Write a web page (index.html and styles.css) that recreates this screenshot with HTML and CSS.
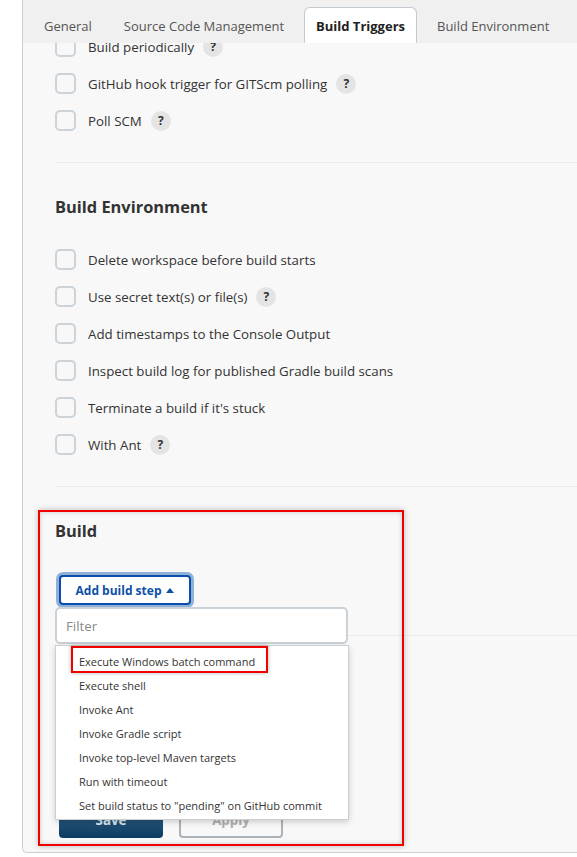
FILE: index.html
```html
<!DOCTYPE html>
<html>
<head>
<meta charset="utf-8">
<link rel="stylesheet" href="styles.css">
</head>
<body>
<div class="page">
  <div class="gutter"></div>
  <div class="panel">
    <nav class="tabs">
      <span class="tab">General</span>
      <span class="tab">Source Code Management</span>
      <span class="tab active">Build Triggers</span>
      <span class="tab">Build Environment</span>
    </nav>
    <div class="content">
      <section class="section first">
        <label class="row"><span class="box"></span><span>Build periodically</span><span class="help">?</span></label>
        <label class="row"><span class="box"></span><span>GitHub hook trigger for GITScm polling</span><span class="help">?</span></label>
        <label class="row"><span class="box"></span><span>Poll SCM</span><span class="help">?</span></label>
      </section>
      <section class="section">
        <h2 class="heading">Build Environment</h2>
        <div class="rows">
          <label class="row"><span class="box"></span><span>Delete workspace before build starts</span></label>
          <label class="row"><span class="box"></span><span>Use secret text(s) or file(s)</span><span class="help">?</span></label>
          <label class="row"><span class="box"></span><span>Add timestamps to the Console Output</span></label>
          <label class="row"><span class="box"></span><span>Inspect build log for published Gradle build scans</span></label>
          <label class="row"><span class="box"></span><span>Terminate a build if it's stuck</span></label>
          <label class="row"><span class="box"></span><span>With Ant</span><span class="help">?</span></label>
        </div>
      </section>
      <section class="section build">
        <h2 class="heading">Build</h2>
        <div class="step-wrap">
          <button class="add-step">Add build step <span class="caret"></span></button>
          <div class="popup">
            <input class="filter" placeholder="Filter">
            <ul class="menu">
              <li class="item hl">Execute Windows batch command<span class="mark"></span></li>
              <li class="item">Execute shell</li>
              <li class="item">Invoke Ant</li>
              <li class="item">Invoke Gradle script</li>
              <li class="item">Invoke top-level Maven targets</li>
              <li class="item">Run with timeout</li>
              <li class="item">Set build status to "pending" on GitHub commit</li>
            </ul>
          </div>
        </div>
      </section>
    </div>
    <div class="bottom-bar">
      <button class="btn save">Save</button>
      <button class="btn apply">Apply</button>
    </div>
    <div class="annot"></div>
  </div>
</div>
</body>
</html>
```
FILE: styles.css
```css
* { box-sizing: border-box; }
html, body { margin: 0; padding: 0; background: #fff; }
body {
  font-family: "Open Sans", "Noto Sans", sans-serif;
  color: #333;
  font-size: 13.3px;
  width: 577px;
  height: 857px;
  overflow: hidden;
}
.page { display: flex; height: 853px; }
.gutter { width: 22px; flex: none; background: #fff; }
.panel {
  position: relative;
  flex: 1;
  display: flex;
  flex-direction: column;
  background: #f8f8f8;
  border-left: 1px solid #c9cfd5;
  border-bottom: 1px solid #c9cfd5;
  border-bottom-left-radius: 5px;
  overflow: hidden;
}
.tabs {
  position: relative;
  z-index: 2;
  height: 43px;
  flex: none;
  display: flex;
  align-items: flex-end;
  gap: 8px;
  padding-left: 9px;
  background: #f0f0f0;
}
.tab {
  height: 36px;
  display: flex;
  align-items: center;
  padding: 0 11px;
  border: 1px solid transparent;
  border-bottom: 0;
  color: #555;
  font-size: 13px;
  white-space: nowrap;
}
.tab.active {
  background: #fff;
  border-color: #c3cad1;
  border-radius: 6px 6px 0 0;
  color: #222;
  font-weight: 700;
}
.content {
  position: relative;
  z-index: 1;
  margin-top: -15px;
  padding-left: 32px;
}
.section {
  padding: 32px 0 23px;
  border-bottom: 1px solid #ebebeb;
}
.section.first { padding-top: 0; }
.heading {
  margin: 0;
  height: 24px;
  line-height: 24px;
  font-size: 16.4px;
  font-weight: 700;
  color: #333;
}
.rows { margin-top: 22px; }
.row {
  height: 37px;
  display: flex;
  align-items: center;
}
.box {
  width: 21px;
  height: 21px;
  flex: none;
  border: 2px solid #ccd3d9;
  border-radius: 5px;
  background: #f8f8f8;
  margin-right: 12px;
}
.help {
  width: 20px;
  height: 20px;
  margin-left: 9px;
  border-radius: 50%;
  background: #e4e4e4;
  display: flex;
  align-items: center;
  justify-content: center;
  font-size: 12px;
  font-weight: 700;
  color: #333;
}
.section.build { padding-bottom: 30px; }
.step-wrap {
  position: relative;
  margin-top: 32px;
  padding-left: 4px;
  height: 30px;
}
.add-step {
  height: 30px;
  width: 132px;
  border: 2px solid #0c4cae;
  border-radius: 4px;
  background: #fff;
  box-shadow: 0 0 0 3px #8fb3d6;
  color: #0d4fa9;
  font-family: inherit;
  font-size: 12px;
  font-weight: 700;
  display: flex;
  align-items: center;
  justify-content: center;
  gap: 5px;
  padding: 0;
}
.caret {
  width: 0;
  height: 0;
  border-left: 4.5px solid transparent;
  border-right: 4.5px solid transparent;
  border-bottom: 5px solid #0d4fa9;
}
.popup {
  position: absolute;
  z-index: 5;
  left: 0;
  top: 32px;
  width: 294px;
}
.filter {
  display: block;
  width: 293px;
  height: 37px;
  border: 2px solid #cad2d9;
  border-radius: 5px;
  background: #fff;
  padding: 0 9px;
  font-family: inherit;
  font-size: 13.3px;
  color: #333;
  outline: none;
}
.filter::placeholder { color: #8a8a8a; }
.menu {
  list-style: none;
  margin: 1px 0 0;
  padding: 4px 0 1px;
  width: 294px;
  background: #fff;
  border: 1px solid #cfcfcf;
  box-shadow: 0 2px 6px rgba(0,0,0,.18);
}
.item {
  position: relative;
  height: 24px;
  line-height: 24px;
  padding-left: 23px;
  font-size: 11px;
  color: #333;
  white-space: nowrap;
}
.mark {
  position: absolute;
  left: 15px;
  top: -4px;
  width: 197px;
  height: 27px;
  border: 2px solid #f20000;
  box-shadow: 0 0 4px rgba(0,0,0,.3);
}
.bottom-bar {
  margin-top: auto;
  display: flex;
  gap: 16px;
  padding: 0 0 14px 36px;
}
.btn {
  width: 104px;
  height: 36px;
  border-radius: 4px;
  font-family: inherit;
  font-size: 13.3px;
  font-weight: 700;
}
.save {
  border: 0;
  color: #d9e6f0;
  background: linear-gradient(#3a6a8e, #0b3b60);
}
.apply {
  background: transparent;
  border: 2px solid #aab2ba;
  color: #b0b0b0;
}
.annot {
  position: absolute;
  z-index: 6;
  left: 15px;
  top: 510px;
  width: 366px;
  height: 336px;
  border: 2px solid #f20000;
  box-shadow: 0 0 6px rgba(0,0,0,.25), inset 0 0 5px rgba(0,0,0,.18);
  pointer-events: none;
}
```
